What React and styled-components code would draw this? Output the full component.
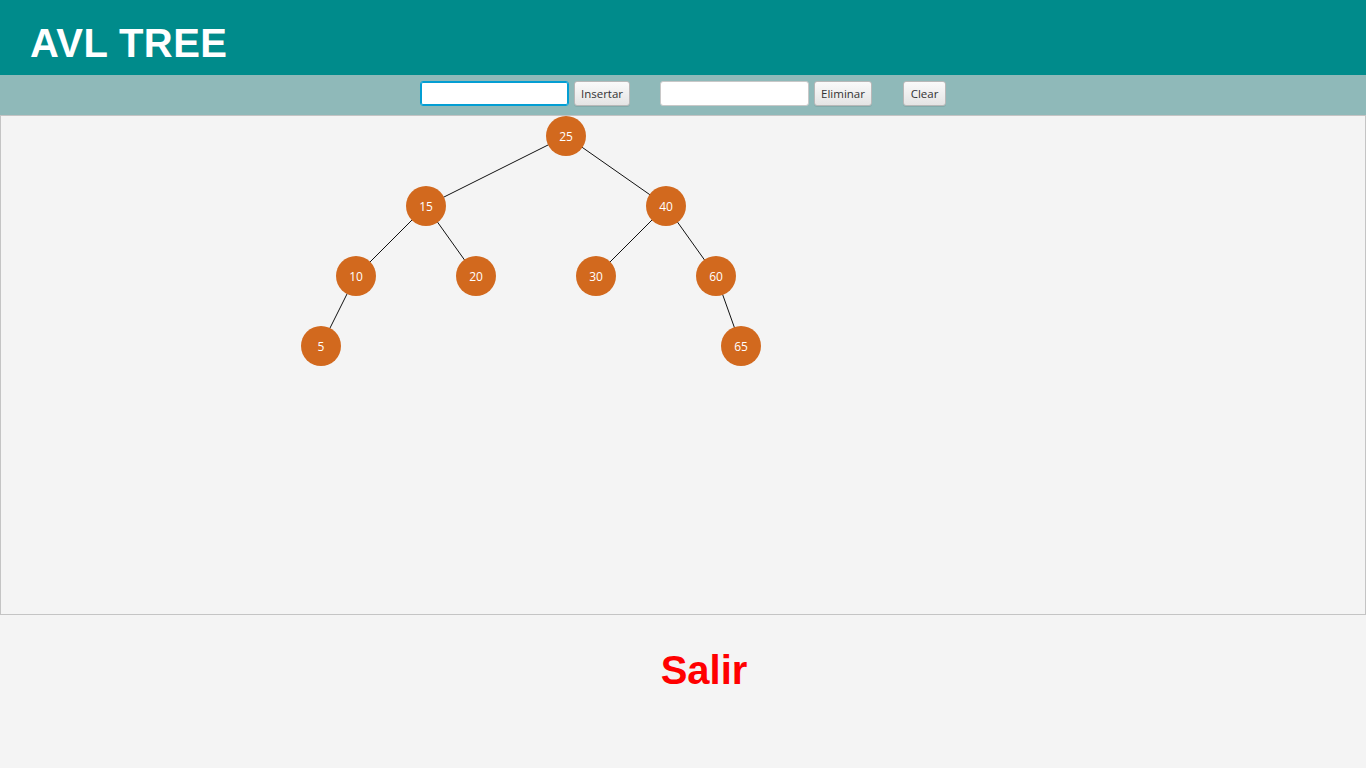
import React from "react";
import styled, { createGlobalStyle } from "styled-components";

const Global = createGlobalStyle`
  html, body { margin: 0; padding: 0; background: #f4f4f4; }
  body { font-family: "Liberation Sans", Arial, sans-serif; }
  * { box-sizing: border-box; }
`;

const Page = styled.div`
  width: 1366px;
  height: 768px;
  display: flex;
  flex-direction: column;
  background: #f4f4f4;
  overflow: hidden;
`;

const Header = styled.header`
  height: 75px;
  background: #008b8b;
  display: flex;
  align-items: center;
  padding-left: 30px;
  padding-top: 12px;
`;

const Title = styled.h1`
  margin: 0;
  font-family: "Liberation Sans", Arial, sans-serif;
  font-weight: bold;
  font-size: 40px;
  color: #ffffff;
  letter-spacing: 0.4px;
`;

const Toolbar = styled.div`
  height: 40px;
  background: #8fb9b9;
  display: flex;
  align-items: flex-start;
  padding-left: 420px;
  padding-top: 6px;
`;

const Group = styled.div`
  display: flex;
  align-items: center;
  gap: 5px;
  margin-right: ${(p) => p.$gap || 0}px;
`;

const Field = styled.input`
  width: ${(p) => p.$w}px;
  height: 25px;
  border-radius: 3px;
  border: 1px solid ${(p) => (p.$focused ? "#039ed3" : "#c8c8c8")};
  box-shadow: ${(p) => (p.$focused ? "0 0 0 1px #039ed3 inset" : "none")};
  background: #ffffff;
  padding: 0 6px;
  font-family: "Open Sans", sans-serif;
  font-size: 12px;
  outline: none;
`;

const Button = styled.button`
  width: ${(p) => p.$w}px;
  height: 25px;
  padding: 0;
  border-radius: 3px;
  border: 1px solid #b8b8b8;
  background: linear-gradient(#fafafa, #e4e4e4);
  box-shadow: 0 1px 0 rgba(0, 0, 0, 0.08);
  font-family: "Open Sans", "Noto Sans", sans-serif;
  font-size: 11.5px;
  color: #333333;
  cursor: pointer;
`;

const Canvas = styled.div`
  height: 500px;
  border: 1px solid #c4c4c4;
  background: #f4f4f4;
  position: relative;
`;

const Footer = styled.div`
  flex: 1;
  display: flex;
  justify-content: center;
  padding-top: 32px;
  padding-left: 42px;
`;

const Exit = styled.button`
  border: none;
  background: transparent;
  padding: 0;
  height: 46px;
  font-family: "Liberation Sans", Arial, sans-serif;
  font-weight: bold;
  font-size: 40px;
  color: #ff0000;
  cursor: pointer;
`;

const nodes = {
  25: [566, 136],
  15: [426, 206],
  40: [666, 206],
  10: [356, 276],
  20: [476, 276],
  30: [596, 276],
  60: [716, 276],
  5: [321, 346],
  65: [741, 346],
};
const edges = [
  [25, 15],
  [25, 40],
  [15, 10],
  [15, 20],
  [40, 30],
  [40, 60],
  [10, 5],
  [60, 65],
];
const OX = 1;
const OY = 116;

function Tree() {
  return (
    <svg width="1364" height="498" style={{ display: "block" }}>
      {edges.map(([a, b]) => (
        <line
          key={`${a}-${b}`}
          x1={nodes[a][0] - OX}
          y1={nodes[a][1] - OY}
          x2={nodes[b][0] - OX}
          y2={nodes[b][1] - OY}
          stroke="#111"
          strokeWidth="1"
        />
      ))}
      {Object.entries(nodes).map(([k, [x, y]]) => (
        <g key={k}>
          <circle cx={x - OX} cy={y - OY} r="20" fill="#d2691e" />
          <text
            x={x - OX}
            y={y - OY + 5}
            textAnchor="middle"
            fill="#ffffff"
            fontSize="12"
            fontFamily="'Open Sans', 'Noto Sans', sans-serif"
          >
            {k}
          </text>
        </g>
      ))}
    </svg>
  );
}

export default function App() {
  return (
    <Page>
      <Global />
      <Header>
        <Title>AVL TREE</Title>
      </Header>
      <Toolbar>
        <Group $gap={30}>
          <Field $w={149} $focused />
          <Button $w={56}>Insertar</Button>
        </Group>
        <Group $gap={31}>
          <Field $w={149} />
          <Button $w={58}>Eliminar</Button>
        </Group>
        <Group>
          <Button $w={43}>Clear</Button>
        </Group>
      </Toolbar>
      <Canvas>
        <Tree />
      </Canvas>
      <Footer>
        <Exit>Salir</Exit>
      </Footer>
    </Page>
  );
}
